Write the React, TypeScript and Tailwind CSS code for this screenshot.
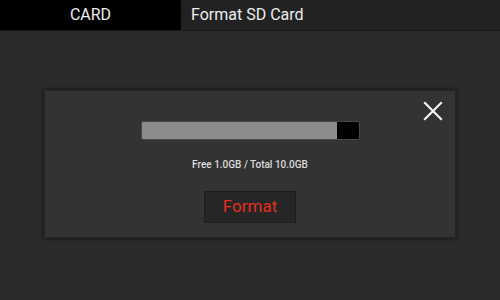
import React from "react";

const App = () => {
  const free = 1.0;
  const total = 10.0;
  const used = ((total - free) / total) * 100;

  return (
    <div
      className="w-[500px] h-[300px] flex flex-col bg-[#2a2a2a] text-white overflow-hidden"
      style={{ fontFamily: "Roboto, 'Liberation Sans', sans-serif" }}
    >
      {/* header */}
      <div className="flex h-[31px] border-b border-[#1a1a1a]">
        <div className="w-[181px] bg-black flex items-center justify-center text-[16px] text-[#eeeeee]">
          CARD
        </div>
        <div className="flex-1 bg-[#222222] flex items-center pl-[10px] text-[16px] text-[#eeeeee]">
          Format SD Card
        </div>
      </div>

      {/* body */}
      <div className="flex-1 pt-[58px] px-[43px]">
        <div className="relative h-[150px] bg-[#333333] border-2 border-[#242424] shadow-[0_0_3px_rgba(0,0,0,0.5)] flex flex-col items-center pt-[30px]">
          <button className="absolute right-[11px] top-[9px] w-[22px] h-[22px] flex items-center justify-center">
            <svg width="20" height="20" viewBox="0 0 20 20">
              <path d="M2 2 L18 18 M18 2 L2 18" stroke="#f2f2f2" strokeWidth="2.2" strokeLinecap="square" />
            </svg>
          </button>

          <div className="w-[219px] h-[19px] bg-black border border-[#4a4a4a] rounded-[2px] overflow-hidden flex">
            <div className="h-full bg-[#8c8c8c]" style={{ width: `${used}%` }} />
          </div>

          <div className="mt-[17px] text-[10px] font-medium text-[#dddddd]">
            Free {free.toFixed(1)}GB / Total {total.toFixed(1)}GB
          </div>

          <button className="mt-[19px] w-[92px] h-[32px] bg-[#262626] border border-[#1c1c1c] text-[#e2301f] text-[17px]">
            Format
          </button>
        </div>
      </div>
    </div>
  );
};

export default App;
